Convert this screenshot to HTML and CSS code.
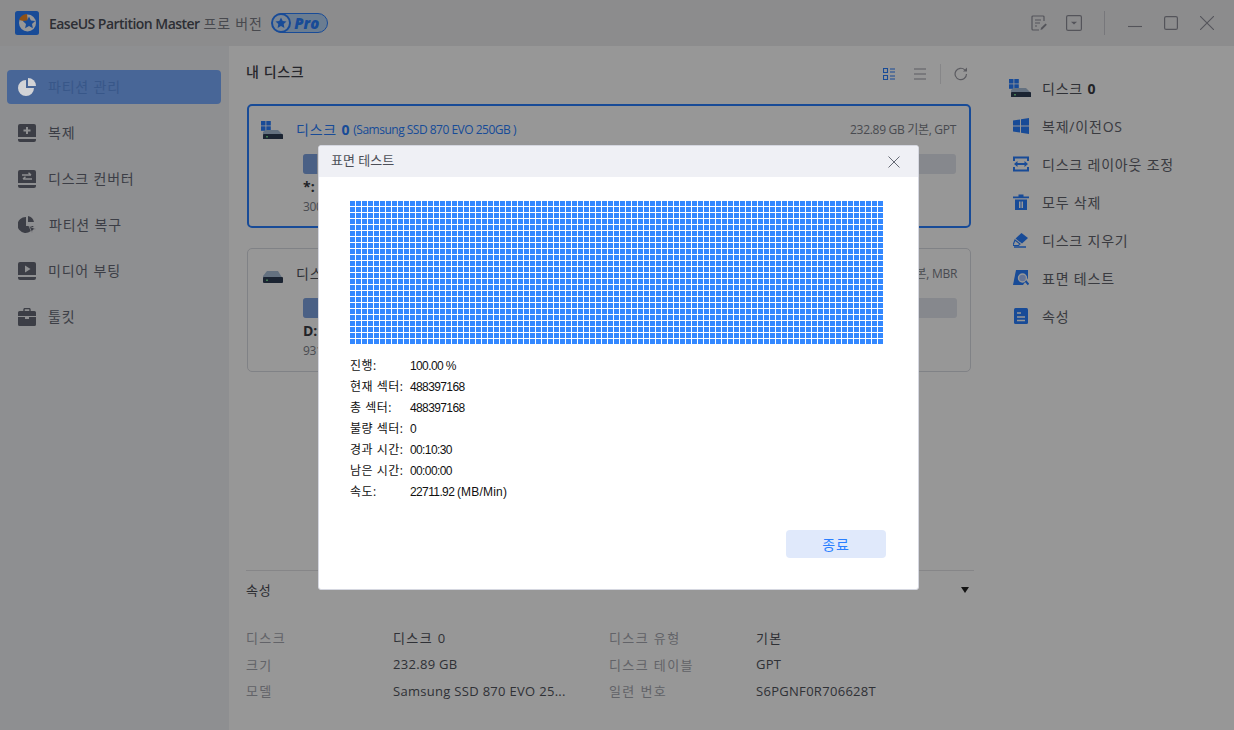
FILE: index.html
```html
<!DOCTYPE html>
<html lang="ko">
<head>
<meta charset="utf-8">
<title>EaseUS Partition Master</title>
<link rel="stylesheet" href="styles.css">
</head>
<body>
<div class="app">
  <header class="titlebar">
    <svg class="logo" viewBox="0 0 24 24" width="24" height="24">
      <rect width="24" height="24" rx="2.5" fill="#2a7fff"/>
      <circle cx="12.5" cy="12" r="8.5" fill="#fff"/>
      <path d="M13 11 L12 3 A9 9 0 0 0 4 9 Z" fill="#f08a24"/>
      <path d="M14 5.500l1.900 4 4.300.5-3.200 3 .9 4.300-3.900-2.200-3.900 2.200.9-4.300-3.200-3 4.300-.5z" fill="#2a7fff"/>
    </svg>
    <span class="app-name">EaseUS Partition Master</span>
    <span class="app-edition">프로 버전</span>
    <span class="pro-badge">
      <svg viewBox="0 0 20 20" width="20" height="20" class="pro-star">
        <circle cx="10" cy="10" r="9" fill="#cfe2fa" stroke="#2a7fff" stroke-width="2"/>
        <path d="M10 4.500l1.700 3.500 3.800.5-2.800 2.600.7 3.800L10 13l-3.400 1.900.7-3.800L4.500 8.500l3.800-.5z" fill="#2a7fff"/>
      </svg>
      <span class="pro-text">Pro</span>
    </span>
    <div class="win-tools">
      <svg viewBox="0 0 16 16" width="16" height="16" class="tool-note"><path d="M13 6V2a1 1 0 0 0-1-1H2a1 1 0 0 0-1 1v12a1 1 0 0 0 1 1h6M4 5h6M4 8h5M4 11h2" fill="none" stroke="#8f8f99" stroke-width="1.2"/><path d="M9.500 15l.6-2.200 4.400-4.400 1.400 1.400-4.400 4.500z" fill="#8f8f99"/></svg>
      <svg viewBox="0 0 16 16" width="16" height="16" class="tool-drop"><rect x=".6" y=".6" width="14.8" height="14.8" rx="1.5" fill="none" stroke="#8f8f99" stroke-width="1.2"/><path d="M5 6.800h6L8 9.600z" fill="#8f8f99"/></svg>
      <span class="tool-sep"></span>
      <svg viewBox="0 0 14 14" width="14" height="14" class="tool-min"><path d="M0 10.500h14" stroke="#8f8f99" stroke-width="1.1"/></svg>
      <svg viewBox="0 0 14 14" width="14" height="14" class="tool-max"><rect x=".6" y=".6" width="12.8" height="12.8" rx="1.5" fill="none" stroke="#8f8f99" stroke-width="1.2"/></svg>
      <svg viewBox="0 0 14 14" width="14" height="14" class="tool-close"><path d="M0 0l14 14M14 0L0 14" stroke="#8f8f99" stroke-width="1.1"/></svg>
    </div>
  </header>

  <div class="workspace">
    <nav class="sidebar">
      <a class="side-item is-active">
        <svg viewBox="0 0 18 18" width="18" height="18"><path d="M8 2v8h8a8 8 0 1 1-8-8z" fill="#d2d3d6"/><path d="M10 0a8 8 0 0 1 8 8h-8z" fill="#d2d3d6"/></svg>
        <span>파티션 관리</span>
      </a>
      <a class="side-item">
        <svg viewBox="0 0 18 18" width="18" height="18"><path d="M2 0h14a2 2 0 0 1 2 2v11H0V2a2 2 0 0 1 2-2z" fill="#666a76"/><path d="M0 15h18v1a2 2 0 0 1-2 2H2a2 2 0 0 1-2-2z" fill="#666a76"/><path d="M9 3v7M5.500 6.500h7" stroke="#f0f1f5" stroke-width="2"/></svg>
        <span>복제</span>
      </a>
      <a class="side-item">
        <svg viewBox="0 0 18 18" width="18" height="18"><path d="M2 0h14a2 2 0 0 1 2 2v11H0V2a2 2 0 0 1 2-2z" fill="#666a76"/><path d="M0 15h18v1a2 2 0 0 1-2 2H2a2 2 0 0 1-2-2z" fill="#666a76"/><path d="M4 5h9M10.500 2.800L13 5M14 9H5M7.500 6.800L5 9" stroke="#f0f1f5" stroke-width="1.500" fill="none"/></svg>
        <span>디스크 컨버터</span>
      </a>
      <a class="side-item">
        <svg viewBox="0 0 19 18" width="19" height="18"><path d="M8 1v9h7.500A8 8 0 1 1 8 1z" fill="#666a76"/><path d="M10 0a8 8 0 0 1 6 6h-6z" fill="#666a76"/><path d="M11 10l7 3-3 1-1 3z" fill="#666a76" stroke="#f0f1f5" stroke-width=".8"/></svg>
        <span>파티션 복구</span>
      </a>
      <a class="side-item">
        <svg viewBox="0 0 18 18" width="18" height="18"><path d="M2 0h14a2 2 0 0 1 2 2v11H0V2a2 2 0 0 1 2-2z" fill="#666a76"/><path d="M0 15h18v1a2 2 0 0 1-2 2H2a2 2 0 0 1-2-2z" fill="#666a76"/><path d="M7 3.500l5.500 3.500L7 10.500z" fill="#f0f1f5"/></svg>
        <span>미디어 부팅</span>
      </a>
      <a class="side-item">
        <svg viewBox="0 0 18 18" width="18" height="18"><path d="M6 3.500V1.500A1 1 0 0 1 7 .6h4a1 1 0 0 1 1 .9v2" fill="none" stroke="#666a76" stroke-width="1.400"/><path d="M1.500 3h15A1.500 1.500 0 0 1 18 4.500V8H0V4.500A1.500 1.500 0 0 1 1.500 3z" fill="#666a76"/><path d="M0 9h7v2h4V9h7v7.500a1.500 1.500 0 0 1-1.500 1.500h-15A1.500 1.500 0 0 1 0 16.500z" fill="#666a76"/></svg>
        <span>툴킷</span>
      </a>
    </nav>

    <main class="main">
      <div class="main-head">
        <h2 class="main-title">내 디스크</h2>
        <div class="view-tools">
          <svg viewBox="0 0 12 12" width="12" height="12"><path d="M.5.5h4v4h-4zM.5 7.500h4v4h-4zM7 1h5M7 4h5M7 8h5M7 11h5" fill="none" stroke="#2a7fff" stroke-width="1.100"/></svg>
          <svg viewBox="0 0 12 12" width="12" height="12" class="view-list"><path d="M0 1h12M0 6h12M0 11h12" stroke="#9a9aa3" stroke-width="1.100"/></svg>
          <span class="view-sep"></span>
          <svg viewBox="0 0 14 14" width="14" height="14"><path d="M12.500 7A5.700 5.700 0 1 1 10.800 2.900" fill="none" stroke="#9a9aa3" stroke-width="1.200"/><path d="M13 .5v4H9z" fill="#9a9aa3"/></svg>
        </div>
      </div>

      <section class="disk-card is-selected">
        <div class="disk-head">
          <svg class="disk-icon" viewBox="0 0 22 18" width="22" height="18"><rect x="0" y="0" width="4.500" height="4.500" fill="#2a7fff"/><rect x="5.300" y="0" width="4.500" height="4.500" fill="#2a7fff"/><rect x="0" y="5.300" width="4.500" height="4.500" fill="#2a7fff"/><rect x="5.300" y="5.300" width="4.500" height="4.500" fill="#2a7fff"/><path d="M2 11l3-2h12l5 5H2z" fill="#a9bfd8"/><rect x="2" y="13" width="20" height="5.500" rx="1" fill="#2e3d55"/><rect x="5" y="15" width="2" height="1.500" fill="#6fd08a"/></svg>
          <span class="disk-name is-blue">디스크 <b>0</b></span>
          <span class="disk-model">(Samsung SSD 870 EVO 250GB )</span>
          <span class="disk-info">232.89 GB 기본, GPT</span>
        </div>
        <div class="disk-bar"><span class="bar-used bar-small"></span></div>
        <div class="part-name">*: (기타)</div>
        <div class="part-size">300 MB</div>
      </section>

      <section class="disk-card">
        <div class="disk-head">
          <svg class="disk-icon" viewBox="0 0 22 18" width="22" height="18"><path d="M2 11l4-5h11l5 8H2z" fill="#a9bfd8"/><rect x="2" y="12" width="20" height="6" rx="1" fill="#2e3d55"/><rect x="5" y="14.500" width="2" height="1.500" fill="#6fd08a"/></svg>
          <span class="disk-name">디스크 1</span>
          <span class="disk-info">931.51 GB 기본, MBR</span>
        </div>
        <div class="disk-bar"><span class="bar-used bar-wide"></span></div>
        <div class="part-name">D: 새 볼륨</div>
        <div class="part-size">931.51 GB</div>
      </section>

      <section class="props">
        <div class="props-head"><span>속성</span><span class="props-caret"></span></div>
        <dl class="props-grid">
          <dt>디스크</dt><dd class="ko">디스크 0</dd><dt>디스크 유형</dt><dd class="ko">기본</dd>
          <dt>크기</dt><dd>232.89 GB</dd><dt>디스크 테이블</dt><dd>GPT</dd>
          <dt>모델</dt><dd>Samsung SSD 870 EVO 25...</dd><dt>일련 번호</dt><dd>S6PGNF0R706628T</dd>
        </dl>
      </section>
    </main>

    <aside class="actions">
      <div class="action is-head">
        <svg viewBox="0 0 22 18" width="22" height="18"><rect x="0" y="0" width="4.500" height="4.500" fill="#2a7fff"/><rect x="5.300" y="0" width="4.500" height="4.500" fill="#2a7fff"/><rect x="0" y="5.300" width="4.500" height="4.500" fill="#2a7fff"/><rect x="5.300" y="5.300" width="4.500" height="4.500" fill="#2a7fff"/><path d="M2 11l3-2h12l5 5H2z" fill="#a9bfd8"/><rect x="2" y="13" width="20" height="5.500" rx="1" fill="#2e3d55"/><rect x="5" y="15" width="2" height="1.500" fill="#6fd08a"/></svg>
        <span>디스크 <b>0</b></span>
      </div>
      <div class="action">
        <svg viewBox="0 0 16 16" width="16" height="16"><path d="M0 2.500L7 1.400V7.400H0zM8 1.200L16 0V7.400H8zM0 8.400H7V14.500L0 13.500zM8 8.400H16V16L8 14.700z" fill="#2a7fff"/></svg>
        <span>복제/이전OS</span>
      </div>
      <div class="action">
        <svg viewBox="0 0 16 16" width="16" height="16"><path d="M1 5V1.500h14V5M1 11v3.500h14V11" fill="none" stroke="#2a7fff" stroke-width="2"/><path d="M1 8l3.500-3v2h7V5L15 8l-3.500 3V9h-7v2z" fill="#2a7fff"/></svg>
        <span>디스크 레이아웃 조정</span>
      </div>
      <div class="action">
        <svg viewBox="0 0 16 16" width="16" height="16"><path d="M0 2.500h16v1.800H0zM5.500 2.500V.5h5v2z" fill="#2a7fff"/><path d="M2 5.500h12V16H2zM6 7.500v6.500h1.500V7.500zM8.500 7.500v6.500H10V7.500z" fill="#2a7fff" fill-rule="evenodd"/></svg>
        <span>모두 삭제</span>
      </div>
      <div class="action">
        <svg viewBox="0 0 16 16" width="16" height="16"><path d="M8.500 1l6.500 5-6 5.500L2.500 6.500z" fill="#2a7fff"/><path d="M2 8l5 4-1.500 1.500H0V13z" fill="none" stroke="#2a7fff" stroke-width="1.200"/><path d="M1 15h12" stroke="#2a7fff" stroke-width="1.500"/></svg>
        <span>디스크 지우기</span>
      </div>
      <div class="action">
        <svg viewBox="0 0 16 16" width="16" height="16"><path d="M3 0h12v8l-5 7H0z" fill="#2a7fff"/><circle cx="9.500" cy="8" r="4" fill="#a9c5ff" stroke="#fff" stroke-width="1.400"/><path d="M12.500 11l3 3.500" stroke="#2a7fff" stroke-width="2"/></svg>
        <span>표면 테스트</span>
      </div>
      <div class="action">
        <svg viewBox="0 0 16 16" width="16" height="16"><rect width="14" height="16" x="1" rx="1.500" fill="#2a7fff"/><path d="M4 5h4M4 9h8M4 12.500h8" stroke="#fff" stroke-width="1.600"/></svg>
        <span>속성</span>
      </div>
    </aside>
  </div>
</div>

<div class="overlay">
  <div class="dialog">
    <div class="dialog-head">
      <span class="dialog-title">표면 테스트</span>
      <svg viewBox="0 0 12 12" width="12" height="12"><path d="M.5.5l11 11M11.500.5l-11 11" stroke="#666a75" stroke-width="1"/></svg>
    </div>
    <div class="dialog-body">
      <div class="sector-map"></div>
      <dl class="stats">
        <dt>진행:</dt><dd>100.00 %</dd>
        <dt>현재 섹터:</dt><dd>488397168</dd>
        <dt>총 섹터:</dt><dd>488397168</dd>
        <dt>불량 섹터:</dt><dd>0</dd>
        <dt>경과 시간:</dt><dd>00:10:30</dd>
        <dt>남은 시간:</dt><dd>00:00:00</dd>
        <dt>속도:</dt><dd>22711.92 <span class="unit">(MB/Min)</span></dd>
      </dl>
      <div class="dialog-foot"><button class="btn-close">종료</button></div>
    </div>
  </div>
</div>
</body>
</html>
```
FILE: styles.css
```css
* { box-sizing: border-box; }
html, body { margin: 0; height: 100%; overflow: hidden; }
body {
  width: 1234px;
  height: 730px;
  background: #fff;
  color: #50535c;
  font-family: "Open Sans", "Noto Sans CJK KR", sans-serif;
  font-size: 14px;
}
.app { display: flex; flex-direction: column; height: 730px; }

/* title bar */
.titlebar {
  display: flex;
  align-items: center;
  height: 46px;
  padding: 0 20px 0 15px;
  background: #ecedef;
  flex: none;
}
.logo { flex: none; margin-right: 10px; }
.app-name { font-size: 14px; font-weight: 600; color: #4d5059; letter-spacing: -.53px; white-space: nowrap; }
.app-edition { margin-left: 4px; color: #7a7c85; letter-spacing: .8px; white-space: nowrap; }
.pro-badge {
  display: flex;
  align-items: center;
  width: 56px;
  height: 20px;
  margin-left: 9px;
  border: 1.5px solid #2a7fff;
  border-radius: 10px;
  background: #b5d3f5;
}
.pro-star { flex: none; margin-left: -1.5px; }
.pro-text {
  margin-left: 3px;
  color: #2a7fff;
  font: italic 800 15px/1 "Open Sans", sans-serif;
}
.win-tools { display: flex; align-items: center; margin-left: auto; }
.tool-drop { margin-left: 19px; }
.tool-sep { width: 1px; height: 24px; margin: 0 23px 0 22px; background: #c9cad0; }
.tool-max { margin-left: 22px; }
.tool-close { margin-left: 22px; }

/* layout */
.workspace { display: flex; flex: 1; min-height: 0; }
.sidebar {
  flex: none;
  width: 229px;
  padding: 24px 8px 0 7px;
  background: #f0f1f5;
}
.side-item {
  display: flex;
  align-items: center;
  height: 34px;
  margin-bottom: 12px;
  padding-left: 11px;
  border-radius: 4px;
  color: #666a76;
  letter-spacing: .8px;
}
.side-item svg { flex: none; margin-right: 12px; }
.side-item span { margin-bottom: 2px; }
.side-item.is-active { background: #7aacff; color: #5f93e8; }
.side-item.is-active svg { position: relative; z-index: 2; }

.main { flex: none; width: 761px; padding: 0 17px 0 17px; background: #fff; display: flex; flex-direction: column; }
.main-head { display: flex; align-items: center; justify-content: space-between; height: 58px; padding: 0 5px 0 0; }
.main-title { margin: 0 0 8px; font-size: 14px; font-weight: 500; color: #3f4149; letter-spacing: .6px; }
.view-tools { display: flex; align-items: center; margin-bottom: 2px; }
.view-list { margin-left: 20px; }
.view-sep { width: 1px; height: 20px; margin: 0 13px 0 14px; background: #e2e2e6; }
.view-tools svg:first-child { margin-right: -1px; }

.disk-card {
  width: 724px;
  height: 124px;
  margin: 0 0 20px 1px;
  padding: 14px 13px 0 13px;
  border: 1px solid #d9dbe2;
  border-radius: 5px;
}
.disk-card.is-selected { padding: 13px 13px 0 12px; border: 2px solid #2a7fff; }
.disk-head { display: flex; align-items: center; height: 22px; }
.disk-icon { flex: none; margin-right: 13px; }
.disk-name { margin-bottom: 2px; color: #50535c; font-size: 14px; letter-spacing: .8px; }
.disk-name.is-blue { color: #2a7fff; }
.disk-name b { font-weight: 700; }
.disk-model { margin: 0 0 2px 3px; color: #2a7fff; font-size: 12px; letter-spacing: -.5px; }
.disk-info { margin: 0 0 2px auto; color: #7b7e88; font-size: 12px; letter-spacing: -.3px; }
.disk-bar { height: 20px; margin: 13px 0 0 42px; border-radius: 3px; background: #e3e6ee; overflow: hidden; }
.bar-used { display: block; height: 100%; background: #7da3e0; }
.bar-small { width: 14px; }
.bar-wide { width: 400px; }
.part-name { margin: 4px 0 0 42px; font-size: 14px; font-weight: 700; color: #3a3c44; line-height: 18px; }
.part-size { margin: 2px 0 0 42px; font-size: 12px; letter-spacing: -.3px; color: #7b7e88; }

.props { margin-top: auto; padding-bottom: 26px; }
.props-head {
  display: flex;
  align-items: center;
  justify-content: space-between;
  height: 39px;
  margin-right: -1px;
  padding-right: 5px;
  border-top: 1px solid #e2e2e6;
  color: #4a4c55;
  font-size: 13px;
  letter-spacing: .8px;
}
.props-caret { width: 0; height: 0; border: 4px solid transparent; border-top: 6px solid #222; border-bottom: 0; }
.props-grid {
  display: grid;
  grid-template-columns: 147px 216px 147px 1fr;
  grid-auto-rows: 26.500px;
  align-items: center;
  margin: 16px 0 0;
  font-size: 13px;
}
.props-grid dt { color: #a6a8b0; letter-spacing: 1.4px; }
.props-grid dd { margin: 0; color: #50535c; letter-spacing: .3px; white-space: nowrap; }
.props-grid dd.ko { letter-spacing: 1.4px; }

.actions { flex: none; width: 244px; padding: 23px 0 0 19px; background: #fff; }
.action {
  display: flex;
  align-items: center;
  height: 38px;
  padding-left: 4px;
  color: #62646d;
  letter-spacing: .8px;
}
.action svg { flex: none; margin-right: 13px; }
.action.is-head { padding-left: 0; color: #50535c; }
.action.is-head svg { margin-right: 11px; }
.action b { font-weight: 700; color: #3a3c44; }

/* modal */
.overlay {
  position: fixed;
  inset: 0;
  z-index: 1;
  display: flex;
  align-items: flex-start;
  padding: 145px 0 0 318px;
  background: rgba(0, 0, 0, .408);
}
.dialog {
  width: 601px;
  height: 445px;
  border: 1px solid #d5d7e0;
  border-radius: 3px;
  background: #fff;
  overflow: hidden;
}
.dialog-head {
  display: flex;
  align-items: center;
  justify-content: space-between;
  height: 31px;
  padding: 0 18px 0 12px;
  background: #eff0f5;
}
.dialog-title { margin-bottom: 4px; font-size: 13px; color: #4c4f58; }
.dialog-body { display: flex; flex-direction: column; padding: 24px 31px 0 31px; }
.sector-map {
  width: 533px;
  height: 144px;
  background-color: #fff;
  background-image:
    linear-gradient(to right, transparent 5px, #fff 5px),
    linear-gradient(to bottom, #3388ff 5px, #fff 5px);
  background-size: 6px 6px;
}
.stats {
  display: grid;
  grid-template-columns: 60px 1fr;
  grid-auto-rows: 21px;
  align-items: center;
  margin: 10px 0 0;
  color: #111;
  font-size: 12px;
  line-height: 16px;
}
.stats dt { letter-spacing: .5px; white-space: nowrap; }
.stats dd { margin: 0; font-family: "Liberation Sans", sans-serif; letter-spacing: -.62px; }
.stats .unit { letter-spacing: .2px; }
.dialog-foot { display: flex; justify-content: flex-end; margin-top: 28px; }
.btn-close {
  width: 100px;
  height: 28px;
  margin-right: 1px;
  border: 0;
  border-radius: 4px;
  background: #e0e9fb;
  color: #2a7fff;
  font: 14px "Noto Sans CJK KR", sans-serif;
  letter-spacing: .8px;
}
```
